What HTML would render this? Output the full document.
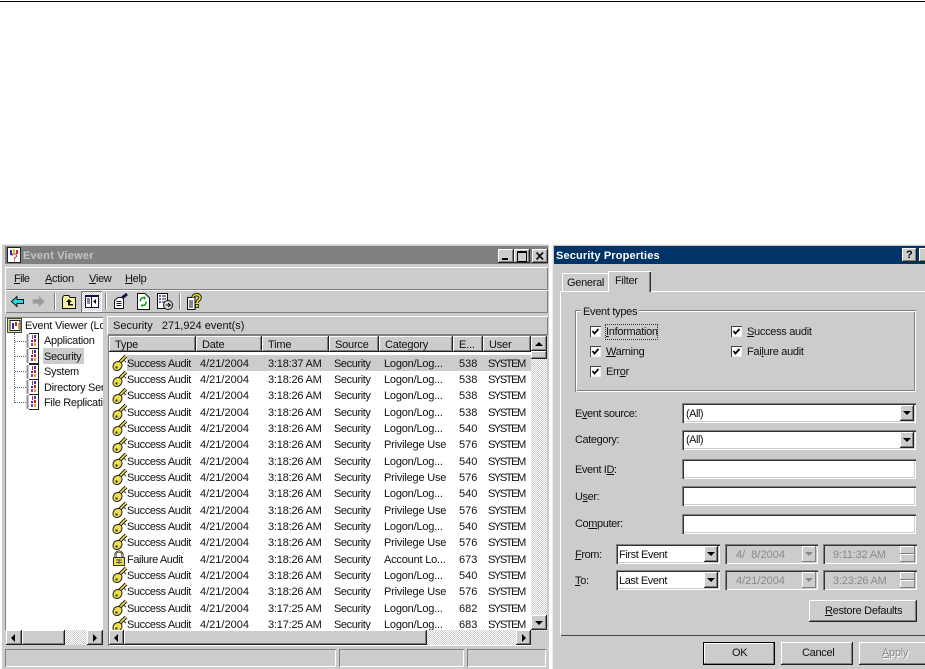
<!DOCTYPE html>
<html><head><meta charset="utf-8"><style>
html,body{margin:0;padding:0;background:#fff}
#p{position:relative;width:925px;height:669px;overflow:hidden;background:#fff;font:11px/15px "Liberation Sans",sans-serif;color:#111}
#p div,#p span.t,#p svg{position:absolute}
.t{position:absolute;white-space:nowrap;font:11px/15px "Liberation Sans",sans-serif;letter-spacing:-.3px}
.g{background:#ccc}
.rs{background:#ccc;box-shadow:inset -1px -1px #222,inset 1px 1px #fff,inset -2px -2px #808080}
.rl{background:#ccc;box-shadow:inset -1px -1px #808080,inset 1px 1px #fff}
.su{background:#fff;box-shadow:inset 1px 1px #808080,inset 2px 2px #333,inset -1px -1px #fff,inset -2px -2px #ccc}
.dis{background:#ccc}
.hat{background:conic-gradient(#fff 25%,#ccc 0 50%,#fff 0 75%,#ccc 0) 0 0/2px 2px}
.etch{box-shadow:inset 0 1px #fff,inset 1px 0 #fff,inset 0 -1px #808080,inset -1px 0 #808080;background:#ccc}
.hd{top:336px;height:16px}
.hd span{position:absolute;left:6px;top:2px;white-space:nowrap;letter-spacing:-.2px}
.r{left:109px;width:422px;height:16px;white-space:nowrap}
.r span{position:absolute;top:2px;white-space:nowrap}
.r span:nth-child(1){left:18px;letter-spacing:-.4px}.r span:nth-child(2){left:91px}.r span:nth-child(3){left:159px;letter-spacing:-.2px}.r span:nth-child(4){left:225px;letter-spacing:-.4px}.r span:nth-child(5){left:275px;letter-spacing:-.2px}.r span:nth-child(6){left:350px}.r span:nth-child(7){left:379px;letter-spacing:-1.4px}
.tri{width:0;height:0;border-style:solid;border-color:transparent}
.dn{border-width:4px 4px 0 4px;border-top-color:#000}
.up{border-width:0 4px 4px 4px;border-bottom-color:#000}
.lf{border-width:4px 4px 4px 0;border-right-color:#000}
.ri{border-width:4px 0 4px 4px;border-left-color:#000}
.cb{width:11px;height:11px;background:#fff;box-shadow:inset 1px 1px #444,inset -1px -1px #eee}
.dot{border-top:1px dotted #666;height:0}
.dotv{border-left:1px dotted #666;width:0}
.dl{color:#8a8a8a}
</style></head><body><div id="p">
<svg width="0" height="0" style="left:0;top:0"><defs>
<symbol id="k" viewBox="0 0 16 17"><path d="M6 10L14 2" stroke="#111" stroke-width="3.600" fill="none"/><path d="M6 10L14 2" stroke="#efe04a" stroke-width="1.600" fill="none"/><path d="M6 7.500C9 7.500 10 9.500 10 11C10 14 7.500 16.500 5 16.500C2.500 16.500 1 15 1 13C1 10 3 7.500 6 7.500Z" fill="#efe04a" stroke="#222"/><rect x="3.500" y="12.500" width="2" height="2" fill="#222"/><path d="M12 6.500l2 1.500" stroke="#333"/></symbol>
<symbol id="b" viewBox="0 0 14 16"><path d="M2.500 .5H12.500V15.500H2.500Z" fill="#fff" stroke="#222"/><rect x="0" y="0" width="3" height="16" fill="#fff"/><path d="M.5 2h2M.5 4h2M.5 6h2M.5 8h2M.5 10h2M.5 12h2M.5 14h2" stroke="#222"/><rect x="6" y="2" width="1" height="4" fill="#c22"/><rect x="8" y="2" width="2" height="3" fill="#33b"/><rect x="5" y="7" width="2" height="2" fill="#33b"/><rect x="8" y="6" width="2" height="3" fill="#c22"/><rect x="5" y="10" width="2" height="3" fill="#a3a"/><rect x="8" y="10" width="2" height="3" fill="#e0a020"/></symbol>
</defs></svg>

<div style="left:0;top:1px;width:925px;height:1px;background:#000"></div>

<!-- Event Viewer window -->
<div class="g" style="left:2px;top:244px;width:547px;height:425px"></div>
<div style="left:2px;top:244px;width:547px;height:1px;background:#e4e4e4"></div>
<div style="left:5px;top:246px;width:543px;height:18px;background:#808080"></div>
<svg style="left:7px;top:247px" width="14" height="16"><rect x=".5" y=".5" width="13" height="15" fill="#fff" stroke="#222"/><rect x="3" y="3" width="2" height="5" fill="#2a2ab0"/><rect x="6" y="2" width="2" height="4" fill="#d8c020"/><rect x="9" y="3" width="2" height="4" fill="#c22"/><path d="M5 9C5 6 10 6 9.500 9.500L7.500 11V12.500M7.500 13.500V14.500" stroke="#c22" fill="none"/></svg>
<span class="t" style="left:23px;top:249px;color:#c4c4c4;font-weight:bold;letter-spacing:.2px">Event Viewer</span>
<div class="rs" style="left:498px;top:249px;width:16px;height:14px"></div><div style="left:502px;top:258px;width:6px;height:2px;background:#000"></div>
<div class="rs" style="left:514px;top:249px;width:16px;height:14px"></div><div style="left:517px;top:251px;width:8px;height:8px;border:1px solid #000;border-top-width:2px;box-sizing:content-box"></div>
<div class="rs" style="left:532px;top:249px;width:16px;height:14px"></div>
<svg style="left:535px;top:251px" width="10" height="10"><path d="M1.500 1.500L8 8.500M8 1.500L1.500 8.500" stroke="#000" stroke-width="1.600"/></svg>

<div class="etch" style="left:5px;top:267px;width:543px;height:23px"></div>
<span class="t" style="left:14px;top:272px;letter-spacing:-.6px"><u>F</u>ile</span>
<span class="t" style="left:45px;top:272px"><u>A</u>ction</span>
<span class="t" style="left:89px;top:272px"><u>V</u>iew</span>
<span class="t" style="left:125px;top:272px"><u>H</u>elp</span>
<div class="etch" style="left:5px;top:290px;width:543px;height:23px"></div>

<!-- toolbar -->
<svg style="left:10px;top:293px" width="40" height="18">
<path d="M1.500 8.500L7 3.500V6.500H13.500V10.500H7V13.500Z" fill="#19e0e0" stroke="#111" stroke-width="1"/>
<path d="M23 6.500H29V3.500L34.500 8.500L29 13.500V10.500H23Z" fill="#999" stroke="#aaa"/>
</svg>
<div style="left:54px;top:293px;width:1px;height:17px;background:#808080"></div><div style="left:55px;top:293px;width:1px;height:17px;background:#fff"></div>
<svg style="left:62px;top:293px" width="15" height="17"><path d="M.5 4.500L2 2.500H7L8 4.500H13.500V15.500H.5Z" fill="#f6f3a0" stroke="#111"/><path d="M7 6L4 9H6V12.500H11V11H8V9H10Z" fill="#111"/></svg>
<div class="hat" style="left:81px;top:291px;width:21px;height:21px;box-shadow:inset 1px 1px #777,inset -1px -1px #fff"></div>
<svg style="left:85px;top:295px" width="14" height="13"><rect x=".5" y=".5" width="13" height="12" fill="#fff" stroke="#114"/><rect x="0" y="0" width="14" height="2" fill="#114"/><path d="M6.500 1V12" stroke="#114"/><path d="M2 4h3M2 6h3M2 8h3" stroke="#114"/><path d="M11 4L8 6.500L11 9Z" fill="#111"/></svg>
<div style="left:105px;top:293px;width:1px;height:17px;background:#808080"></div><div style="left:106px;top:293px;width:1px;height:17px;background:#fff"></div>
<svg style="left:113px;top:293px" width="16" height="17"><path d="M1.500 7.500L5 4.500H10.500V15.500H1.500Z" fill="#fff" stroke="#111"/><path d="M3.500 8.500h5M3.500 10.500h5M3.500 12.500h5" stroke="#111"/><path d="M9 5L14 1" stroke="#114" stroke-width="3"/></svg>
<svg style="left:137px;top:293px" width="13" height="17"><path d="M.5 .5H8L12.500 5V16.500H.5Z" fill="#fff" stroke="#111"/><path d="M7 4.500C4 4.500 3 7 3.500 8.500M5.500 12.500C8.500 12.500 9.500 10 9 8.500" stroke="#19a019" stroke-width="1.600" fill="none"/><path d="M7 3V7L9 5ZM5.500 10.500V14.500L3.500 12.500Z" fill="#19a019"/></svg>
<svg style="left:157px;top:293px" width="16" height="17"><path d="M.5 .5H10.500V15.500H.5Z" fill="#fff" stroke="#111"/><path d="M2 3h2M2 6h2M2 9h2" stroke="#2238b0" stroke-width="1.500"/><path d="M5 3h4M5 6h4M5 9h3" stroke="#111"/><circle cx="11" cy="12" r="4.500" fill="#ddd" stroke="#111"/><path d="M8.500 12H13M11 10L13.500 12L11 14" stroke="#111" fill="none"/></svg>
<div style="left:179px;top:293px;width:1px;height:17px;background:#808080"></div><div style="left:180px;top:293px;width:1px;height:17px;background:#fff"></div>
<svg style="left:187px;top:293px" width="15" height="17"><path d="M.5 4.500H8V16.500H.5Z" fill="#fff" stroke="#111"/><path d="M2 8h4M2 10h4M2 12h4M2 14h4" stroke="#111"/><path d="M6 4.500C6 1 13 .5 13 4.500C13 7.500 10 7 10 10" stroke="#111" stroke-width="3.400" fill="none"/><path d="M6 4.500C6 1 13 .5 13 4.500C13 7.500 10 7 10 10" stroke="#f0e020" stroke-width="1.600" fill="none"/><rect x="8.500" y="11.500" width="3" height="3" fill="#f0e020" stroke="#111" stroke-width=".8"/></svg>

<!-- tree pane -->
<div style="left:5px;top:317px;width:98px;height:313px;background:#fff;overflow:hidden;box-shadow:inset 1px 1px #808080">
<span class="t" style="left:20px;top:2px;letter-spacing:-.2px">Event Viewer (Local)</span>
<svg style="left:2px;top:1px" width="15" height="15"><rect x=".5" y=".5" width="14" height="14" fill="#e8e090" stroke="#444"/><rect x="3" y="2.500" width="10" height="10" fill="#fff" stroke="#222"/><rect x="5" y="5" width="2" height="6" fill="#2a2ab0"/><rect x="8" y="4" width="2" height="4" fill="#c22"/><rect x="11" y="5" width="1" height="6" fill="#d0b020"/></svg>
<div class="dotv" style="left:9px;top:16px;height:70px"></div>
<div class="dot" style="left:10px;top:24px;width:11px"></div>
<div class="dot" style="left:10px;top:39px;width:11px"></div>
<div class="dot" style="left:10px;top:54px;width:11px"></div>
<div class="dot" style="left:10px;top:70px;width:11px"></div>
<div class="dot" style="left:10px;top:85px;width:11px"></div>
<svg style="left:21px;top:16px" width="14" height="16"><use href="#b" width="14" height="16"/></svg>
<svg style="left:21px;top:31px" width="14" height="16"><use href="#b" width="14" height="16"/></svg>
<svg style="left:21px;top:47px" width="14" height="16"><use href="#b" width="14" height="16"/></svg>
<svg style="left:21px;top:62px" width="14" height="16"><use href="#b" width="14" height="16"/></svg>
<svg style="left:21px;top:77px" width="14" height="16"><use href="#b" width="14" height="16"/></svg>
<div style="left:38px;top:31px;width:41px;height:16px;background:#ccc"></div>
<span class="t" style="left:39px;top:17px">Application</span>
<span class="t" style="left:39px;top:33px">Security</span>
<span class="t" style="left:39px;top:48px">System</span>
<span class="t" style="left:39px;top:64px">Directory Service</span>
<span class="t" style="left:39px;top:79px">File Replication Service</span>
</div>
<div class="hat" style="left:6px;top:630px;width:97px;height:15px"></div>
<div class="rs" style="left:6px;top:630px;width:16px;height:15px"></div><div class="tri lf" style="left:11px;top:634px"></div>
<div class="rs" style="left:22px;top:630px;width:43px;height:15px"></div>
<div class="rs" style="left:87px;top:630px;width:16px;height:15px"></div><div class="tri ri" style="left:93px;top:634px"></div>

<!-- right pane -->
<div style="left:103px;top:315px;width:4px;height:332px;background:#ccc"></div>
<div class="etch" style="left:107px;top:316px;width:441px;height:19px"></div>
<span class="t" style="left:113px;top:319px;letter-spacing:0">Security&nbsp;&nbsp;&nbsp;271,924 event(s)</span>

<div style="left:108px;top:335px;width:439px;height:311px;background:#fff;box-shadow:inset 1px 1px #808080"></div>
<div class="rs hd" style="left:109px;width:87px"><span>Type</span></div>
<div class="rs hd" style="left:196px;width:66px"><span>Date</span></div>
<div class="rs hd" style="left:262px;width:67px"><span>Time</span></div>
<div class="rs hd" style="left:329px;width:50px"><span>Source</span></div>
<div class="rs hd" style="left:379px;width:74px"><span>Category</span></div>
<div class="rs hd" style="left:453px;width:30px"><span>E...</span></div>
<div class="rs hd" style="left:483px;width:48px"><span>User</span></div>

<div style="left:109px;top:352px;width:422px;height:278px;overflow:hidden" id="ls">
<div style="left:18px;top:3px;width:404px;height:16px;background:#ccc"></div>
<svg style="left:3px;top:2px" width="16" height="17"><use href="#k" width="16" height="17"/></svg>
<svg style="left:3px;top:18px" width="16" height="17"><use href="#k" width="16" height="17"/></svg>
<svg style="left:3px;top:35px" width="16" height="17"><use href="#k" width="16" height="17"/></svg>
<svg style="left:3px;top:51px" width="16" height="17"><use href="#k" width="16" height="17"/></svg>
<svg style="left:3px;top:67px" width="16" height="17"><use href="#k" width="16" height="17"/></svg>
<svg style="left:3px;top:84px" width="16" height="17"><use href="#k" width="16" height="17"/></svg>
<svg style="left:3px;top:100px" width="16" height="17"><use href="#k" width="16" height="17"/></svg>
<svg style="left:3px;top:116px" width="16" height="17"><use href="#k" width="16" height="17"/></svg>
<svg style="left:3px;top:133px" width="16" height="17"><use href="#k" width="16" height="17"/></svg>
<svg style="left:3px;top:149px" width="16" height="17"><use href="#k" width="16" height="17"/></svg>
<svg style="left:3px;top:165px" width="16" height="17"><use href="#k" width="16" height="17"/></svg>
<svg style="left:3px;top:181px" width="16" height="17"><use href="#k" width="16" height="17"/></svg>
<svg style="left:3px;top:198px" width="14" height="17"><path d="M3.500 8V4.500C3.500 .5 10.500 .5 10.500 4.500V8" fill="none" stroke="#111" stroke-width="2"/><path d="M3.500 8V4.500C3.500 .5 10.500 .5 10.500 4.500V8" fill="none" stroke="#e8e070" stroke-width=".7"/><rect x="1.500" y="7.500" width="11" height="8" fill="#eedf40" stroke="#333"/><path d="M4 10h6M7 9v5M4 12.500h6" stroke="#554"/></svg>
<svg style="left:3px;top:214px" width="16" height="17"><use href="#k" width="16" height="17"/></svg>
<svg style="left:3px;top:230px" width="16" height="17"><use href="#k" width="16" height="17"/></svg>
<svg style="left:3px;top:247px" width="16" height="17"><use href="#k" width="16" height="17"/></svg>
<svg style="left:3px;top:263px" width="16" height="17"><use href="#k" width="16" height="17"/></svg>
</div>
<div class="r" style="top:355px"><span>Success Audit</span><span>4/21/2004</span><span>3:18:37 AM</span><span>Security</span><span>Logon/Log...</span><span>538</span><span>SYSTEM</span></div>
<div class="r" style="top:371px"><span>Success Audit</span><span>4/21/2004</span><span>3:18:26 AM</span><span>Security</span><span>Logon/Log...</span><span>538</span><span>SYSTEM</span></div>
<div class="r" style="top:387px"><span>Success Audit</span><span>4/21/2004</span><span>3:18:26 AM</span><span>Security</span><span>Logon/Log...</span><span>538</span><span>SYSTEM</span></div>
<div class="r" style="top:404px"><span>Success Audit</span><span>4/21/2004</span><span>3:18:26 AM</span><span>Security</span><span>Logon/Log...</span><span>538</span><span>SYSTEM</span></div>
<div class="r" style="top:420px"><span>Success Audit</span><span>4/21/2004</span><span>3:18:26 AM</span><span>Security</span><span>Logon/Log...</span><span>540</span><span>SYSTEM</span></div>
<div class="r" style="top:436px"><span>Success Audit</span><span>4/21/2004</span><span>3:18:26 AM</span><span>Security</span><span>Privilege Use</span><span>576</span><span>SYSTEM</span></div>
<div class="r" style="top:453px"><span>Success Audit</span><span>4/21/2004</span><span>3:18:26 AM</span><span>Security</span><span>Logon/Log...</span><span>540</span><span>SYSTEM</span></div>
<div class="r" style="top:469px"><span>Success Audit</span><span>4/21/2004</span><span>3:18:26 AM</span><span>Security</span><span>Privilege Use</span><span>576</span><span>SYSTEM</span></div>
<div class="r" style="top:485px"><span>Success Audit</span><span>4/21/2004</span><span>3:18:26 AM</span><span>Security</span><span>Logon/Log...</span><span>540</span><span>SYSTEM</span></div>
<div class="r" style="top:502px"><span>Success Audit</span><span>4/21/2004</span><span>3:18:26 AM</span><span>Security</span><span>Privilege Use</span><span>576</span><span>SYSTEM</span></div>
<div class="r" style="top:518px"><span>Success Audit</span><span>4/21/2004</span><span>3:18:26 AM</span><span>Security</span><span>Logon/Log...</span><span>540</span><span>SYSTEM</span></div>
<div class="r" style="top:534px"><span>Success Audit</span><span>4/21/2004</span><span>3:18:26 AM</span><span>Security</span><span>Privilege Use</span><span>576</span><span>SYSTEM</span></div>
<div class="r" style="top:551px"><span>Failure Audit</span><span>4/21/2004</span><span>3:18:26 AM</span><span>Security</span><span>Account Lo...</span><span>673</span><span>SYSTEM</span></div>
<div class="r" style="top:567px"><span>Success Audit</span><span>4/21/2004</span><span>3:18:26 AM</span><span>Security</span><span>Logon/Log...</span><span>540</span><span>SYSTEM</span></div>
<div class="r" style="top:583px"><span>Success Audit</span><span>4/21/2004</span><span>3:18:26 AM</span><span>Security</span><span>Privilege Use</span><span>576</span><span>SYSTEM</span></div>
<div class="r" style="top:600px"><span>Success Audit</span><span>4/21/2004</span><span>3:17:25 AM</span><span>Security</span><span>Logon/Log...</span><span>682</span><span>SYSTEM</span></div>
<div class="r" style="top:616px"><span>Success Audit</span><span>4/21/2004</span><span>3:17:25 AM</span><span>Security</span><span>Logon/Log...</span><span>683</span><span>SYSTEM</span></div>

<!-- scrollbars of list -->
<div class="hat" style="left:531px;top:336px;width:16px;height:295px"></div>
<div class="rs" style="left:531px;top:336px;width:16px;height:15px"></div><div class="tri up" style="left:535px;top:342px"></div>
<div class="rs" style="left:531px;top:351px;width:16px;height:8px"></div>
<div class="rs" style="left:531px;top:615px;width:16px;height:15px"></div><div class="tri dn" style="left:535px;top:621px"></div>
<div class="hat" style="left:109px;top:630px;width:422px;height:15px"></div>
<div class="rs" style="left:109px;top:630px;width:15px;height:15px"></div><div class="tri lf" style="left:114px;top:634px"></div>
<div class="rs" style="left:124px;top:630px;width:303px;height:15px"></div>
<div class="rs" style="left:516px;top:630px;width:15px;height:15px"></div><div class="tri ri" style="left:522px;top:634px"></div>
<div class="g" style="left:531px;top:631px;width:16px;height:15px"></div>

<!-- status bar -->
<div style="left:5px;top:649px;width:331px;height:18px;box-shadow:inset 1px 1px #808080,inset -1px -1px #fff"></div>
<div style="left:339px;top:649px;width:125px;height:18px;box-shadow:inset 1px 1px #808080,inset -1px -1px #fff"></div>
<div style="left:467px;top:649px;width:79px;height:18px;box-shadow:inset 1px 1px #808080,inset -1px -1px #fff"></div>

<!-- dialog -->
<div class="g" style="left:552px;top:244px;width:373px;height:425px;box-shadow:inset 1px 1px #eee"></div>
<div style="left:554px;top:246px;width:371px;height:18px;background:#003366"></div>
<span class="t" style="left:556px;top:249px;color:#fff;font-weight:bold;letter-spacing:.15px">Security Properties</span>
<div class="rs" style="left:902px;top:248px;width:15px;height:14px"></div><span class="t" style="left:906px;top:248px;font-weight:bold;color:#000">?</span>
<div class="rs" style="left:919px;top:248px;width:15px;height:14px"></div>

<!-- tab panel -->
<div style="left:560px;top:291px;width:370px;height:345px;box-shadow:inset 1px 1px #fff,inset 0 -1px #444"></div>
<div class="g" style="left:562px;top:273px;width:46px;height:18px;box-shadow:inset 1px 1px #fff"></div>
<span class="t" style="left:567px;top:276px">General</span>
<div class="g" style="left:608px;top:271px;width:43px;height:21px;box-shadow:inset 1px 1px #fff,inset -1px 0 #333,inset -2px 0 #808080"></div>
<span class="t" style="left:615px;top:274px">Filter</span>

<div style="left:575px;top:310px;width:341px;height:82px;box-shadow:inset 1px 1px #808080,inset 2px 2px #fff,inset -1px -1px #fff,inset -2px -2px #808080"></div>
<div class="g" style="left:581px;top:304px;width:58px;height:13px"></div>
<span class="t" style="left:583px;top:305px">Event types</span>

<div class="cb" style="left:590px;top:326px"></div><svg style="left:590px;top:326px" width="11" height="11"><path d="M2.500 5L4.500 7.500L8.500 3" stroke="#000" stroke-width="1.800" fill="none"/></svg>
<div class="cb" style="left:590px;top:346px"></div><svg style="left:590px;top:346px" width="11" height="11"><path d="M2.500 5L4.500 7.500L8.500 3" stroke="#000" stroke-width="1.800" fill="none"/></svg>
<div class="cb" style="left:590px;top:366px"></div><svg style="left:590px;top:366px" width="11" height="11"><path d="M2.500 5L4.500 7.500L8.500 3" stroke="#000" stroke-width="1.800" fill="none"/></svg>
<div class="cb" style="left:731px;top:326px"></div><svg style="left:731px;top:326px" width="11" height="11"><path d="M2.500 5L4.500 7.500L8.500 3" stroke="#000" stroke-width="1.800" fill="none"/></svg>
<div class="cb" style="left:731px;top:346px"></div><svg style="left:731px;top:346px" width="11" height="11"><path d="M2.500 5L4.500 7.500L8.500 3" stroke="#000" stroke-width="1.800" fill="none"/></svg>
<span class="t" style="left:606px;top:325px"><u>I</u>nformation</span>
<div style="left:605px;top:324px;width:51px;height:14px;border:1px dotted #333"></div>
<span class="t" style="left:606px;top:345px"><u>W</u>arning</span>
<span class="t" style="left:606px;top:365px">Err<u>o</u>r</span>
<span class="t" style="left:747px;top:325px"><u>S</u>uccess audit</span>
<span class="t" style="left:747px;top:345px">Fai<u>l</u>ure audit</span>

<span class="t" style="left:575px;top:407px;letter-spacing:-.4px">E<u>v</u>ent source:</span>
<span class="t" style="left:575px;top:433px;letter-spacing:-.4px">Cate<u>g</u>ory:</span>
<span class="t" style="left:575px;top:463px;letter-spacing:-.4px">Event I<u>D</u>:</span>
<span class="t" style="left:575px;top:490px;letter-spacing:-.4px">U<u>s</u>er:</span>
<span class="t" style="left:575px;top:517px;letter-spacing:-.4px">Co<u>m</u>puter:</span>
<span class="t" style="left:575px;top:548px;letter-spacing:-.4px"><u>F</u>rom:</span>
<span class="t" style="left:575px;top:574px"><u>T</u>o:</span>

<div class="su" style="left:682px;top:403px;width:234px;height:20px"></div><span class="t" style="left:686px;top:407px;letter-spacing:-.5px">(All)</span>
<div class="rs" style="left:900px;top:405px;width:14px;height:16px"></div><div class="tri dn" style="left:903px;top:411px"></div>
<div class="su" style="left:682px;top:430px;width:234px;height:20px"></div><span class="t" style="left:686px;top:433px;letter-spacing:-.5px">(All)</span>
<div class="rs" style="left:900px;top:432px;width:14px;height:16px"></div><div class="tri dn" style="left:903px;top:438px"></div>
<div class="su" style="left:682px;top:459px;width:234px;height:20px"></div>
<div class="su" style="left:682px;top:486px;width:234px;height:20px"></div>
<div class="su" style="left:682px;top:514px;width:234px;height:20px"></div>

<div class="su" style="left:616px;top:544px;width:104px;height:20px"></div><span class="t" style="left:619px;top:548px;letter-spacing:-.4px">First Event</span>
<div class="rs" style="left:704px;top:546px;width:14px;height:16px"></div><div class="tri dn" style="left:707px;top:552px"></div>
<div class="su" style="left:616px;top:570px;width:104px;height:20px"></div><span class="t" style="left:619px;top:574px;letter-spacing:-.4px">Last Event</span>
<div class="rs" style="left:704px;top:572px;width:14px;height:16px"></div><div class="tri dn" style="left:707px;top:578px"></div>

<div class="su dis" style="left:725px;top:544px;width:93px;height:20px"></div><span class="t dl" style="left:736px;top:548px;letter-spacing:0">4/&nbsp;&nbsp;8/2004</span>
<div class="rl" style="left:802px;top:546px;width:14px;height:16px"></div><div class="tri dn" style="left:805px;top:552px;border-top-color:#888"></div>
<div class="su dis" style="left:725px;top:570px;width:93px;height:20px"></div><span class="t dl" style="left:736px;top:574px;letter-spacing:0">4/21/2004</span>
<div class="rl" style="left:802px;top:572px;width:14px;height:16px"></div><div class="tri dn" style="left:805px;top:578px;border-top-color:#888"></div>

<div class="su dis" style="left:823px;top:544px;width:94px;height:20px"></div><span class="t dl" style="left:833px;top:548px;letter-spacing:-.2px">9:11:32 AM</span>
<div class="rl" style="left:900px;top:546px;width:15px;height:8px"></div><div class="rl" style="left:900px;top:554px;width:15px;height:8px"></div>
<div class="su dis" style="left:823px;top:570px;width:94px;height:20px"></div><span class="t dl" style="left:833px;top:574px;letter-spacing:-.2px">3:23:26 AM</span>
<div class="rl" style="left:900px;top:572px;width:15px;height:8px"></div><div class="rl" style="left:900px;top:580px;width:15px;height:8px"></div>

<div class="rs" style="left:809px;top:600px;width:108px;height:22px"></div>
<span class="t" style="left:825px;top:604px"><u>R</u>estore Defaults</span>

<div class="rs" style="left:703px;top:642px;width:72px;height:23px;box-shadow:inset 0 0 0 1px #000,inset -2px -2px #808080,inset 2px 2px #fff"></div>
<span class="t" style="left:732px;top:646px">OK</span>
<div class="rs" style="left:781px;top:642px;width:72px;height:23px"></div>
<span class="t" style="left:802px;top:646px">Cancel</span>
<div class="rs" style="left:859px;top:642px;width:72px;height:23px"></div>
<span class="t dl" style="left:882px;top:646px;text-shadow:1px 1px #fff"><u>A</u>pply</span>
</div></body></html>
